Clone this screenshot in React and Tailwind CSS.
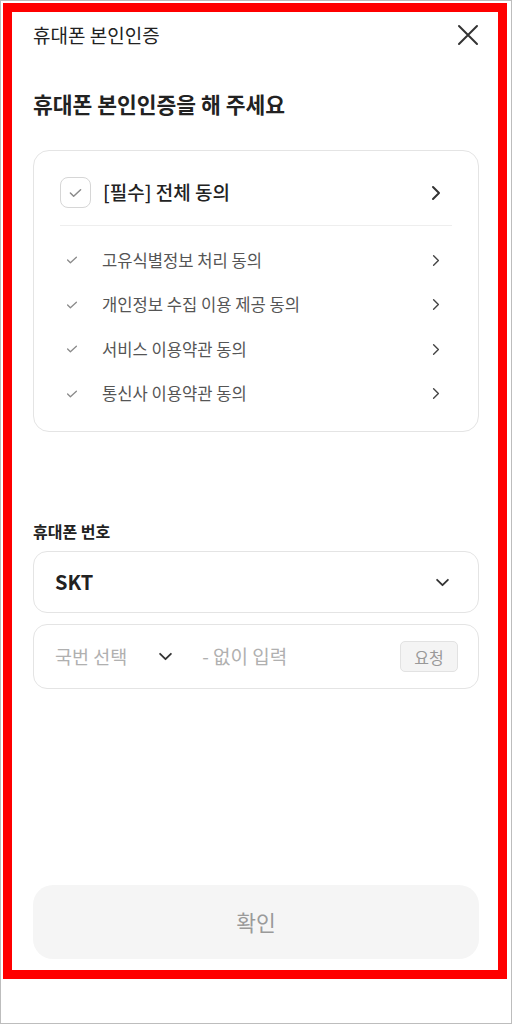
import React from 'react'

const font = { fontFamily: '"Noto Sans CJK KR", "Noto Sans", sans-serif' }

const Chevron = ({ className = 'w-[10px] h-[16px]', strokeWidth = 2 }) => (
  <svg viewBox="0 0 10 16" className={className} fill="none" stroke="currentColor" strokeWidth={strokeWidth} strokeLinecap="round" strokeLinejoin="round">
    <path d="M2 2l6 6-6 6" />
  </svg>
)

const ChevronDown = ({ className = 'w-[16px] h-[10px]' }) => (
  <svg viewBox="0 0 16 10" className={className} fill="none" stroke="currentColor" strokeWidth={2} strokeLinecap="round" strokeLinejoin="round">
    <path d="M2 2l6 6 6-6" />
  </svg>
)

const Check = ({ className }) => (
  <svg viewBox="0 0 14 10" className={className} fill="none" stroke="currentColor" strokeWidth={1.6} strokeLinecap="round" strokeLinejoin="round">
    <path d="M1.5 5l3.5 3.5L12.5 1.5" />
  </svg>
)

const terms = [
  '고유식별정보 처리 동의',
  '개인정보 수집 이용 제공 동의',
  '서비스 이용약관 동의',
  '통신사 이용약관 동의',
]

export default function App() {
  return (
    <div className="relative w-[512px] h-[1024px] border border-[#bdbdbd] bg-white" style={font}>
      {/* header */}
      <div className="flex items-center justify-between h-[68px] px-8">
        <h1 className="text-[19px] text-[#222]">휴대폰 본인인증</h1>
        <svg viewBox="0 0 22 22" className="w-[22px] h-[22px] text-[#333]" fill="none" stroke="currentColor" strokeWidth={2} strokeLinecap="round">
          <path d="M2 2l18 18M20 2L2 20" />
        </svg>
      </div>

      <div className="px-8">
        <h2 className="mt-[20px] text-[21.5px] font-bold text-[#222] leading-[30px]">휴대폰 본인인증을 해 주세요</h2>

        {/* agreements */}
        <div className="mt-[31px] border-[1.5px] border-[#e4e4e4] rounded-[16px] px-[26px] pt-[26px] pb-[15px]">
          <div className="flex items-center justify-between">
            <div className="flex items-center gap-3">
              <div className="w-[31px] h-[31px] rounded-[8px] border-[1.5px] border-[#d6d6d6] flex items-center justify-center">
                <Check className="w-[13px] h-[10px] text-[#8a8a8a]" />
              </div>
              <span className="text-[19px] font-medium text-[#222]">[필수] 전체 동의</span>
            </div>
            <Chevron className="w-[10px] h-[16px] text-[#333] mr-[11px]" />
          </div>
          <div className="mt-[17px] mb-[12px] h-px bg-[#eeeeee]" />
          <ul>
            {terms.map((t) => (
              <li key={t} className="flex items-center justify-between h-[44.5px]">
                <div className="flex items-center">
                  <Check className="w-[12px] h-[8px] text-[#8a8a8a] ml-[6px] mr-[24px]" />
                  <span className="text-[16.6px] text-[#555]">{t}</span>
                </div>
                <Chevron className="w-[8px] h-[13px] text-[#444] mr-[12px]" strokeWidth={1.7} />
              </li>
            ))}
          </ul>
        </div>

        {/* phone */}
        <div className="mt-[88px] text-[16px] font-semibold text-[#222] leading-[22px]">휴대폰 번호</div>
        <div className="mt-[9px] h-[62px] border-[1.5px] border-[#e4e4e4] rounded-[14px] flex items-center justify-between pl-[21px] pr-[28px]">
          <span className="text-[20px] font-bold text-[#222]">SKT</span>
          <ChevronDown className="w-[15px] h-[9px] text-[#333]" />
        </div>
        <div className="mt-[11px] h-[65px] border-[1.5px] border-[#e4e4e4] rounded-[14px] flex items-center pl-[21px] pr-[20px]">
          <span className="text-[18.5px] text-[#b0b0b0]">국번 선택</span>
          <ChevronDown className="w-[15px] h-[9px] text-[#333] ml-[31px]" />
          <span className="ml-[29px] text-[19px] text-[#b0b0b0]">- 없이 입력</span>
          <span className="ml-auto w-[58px] h-[31px] rounded-[5px] border border-[#e2e2e2] bg-[#f4f4f4] flex items-center justify-center text-[16px] text-[#999]">요청</span>
        </div>

        <button className="mt-[196px] w-full h-[74px] rounded-[20px] bg-[#f5f5f5] text-[21.5px] text-[#9a9a9a]">확인</button>
      </div>

      {/* red highlight frame */}
      <div className="absolute left-[2px] top-[2px] w-[504px] h-[976px] border-[9px] border-[#ff0000] pointer-events-none" />
    </div>
  )
}
